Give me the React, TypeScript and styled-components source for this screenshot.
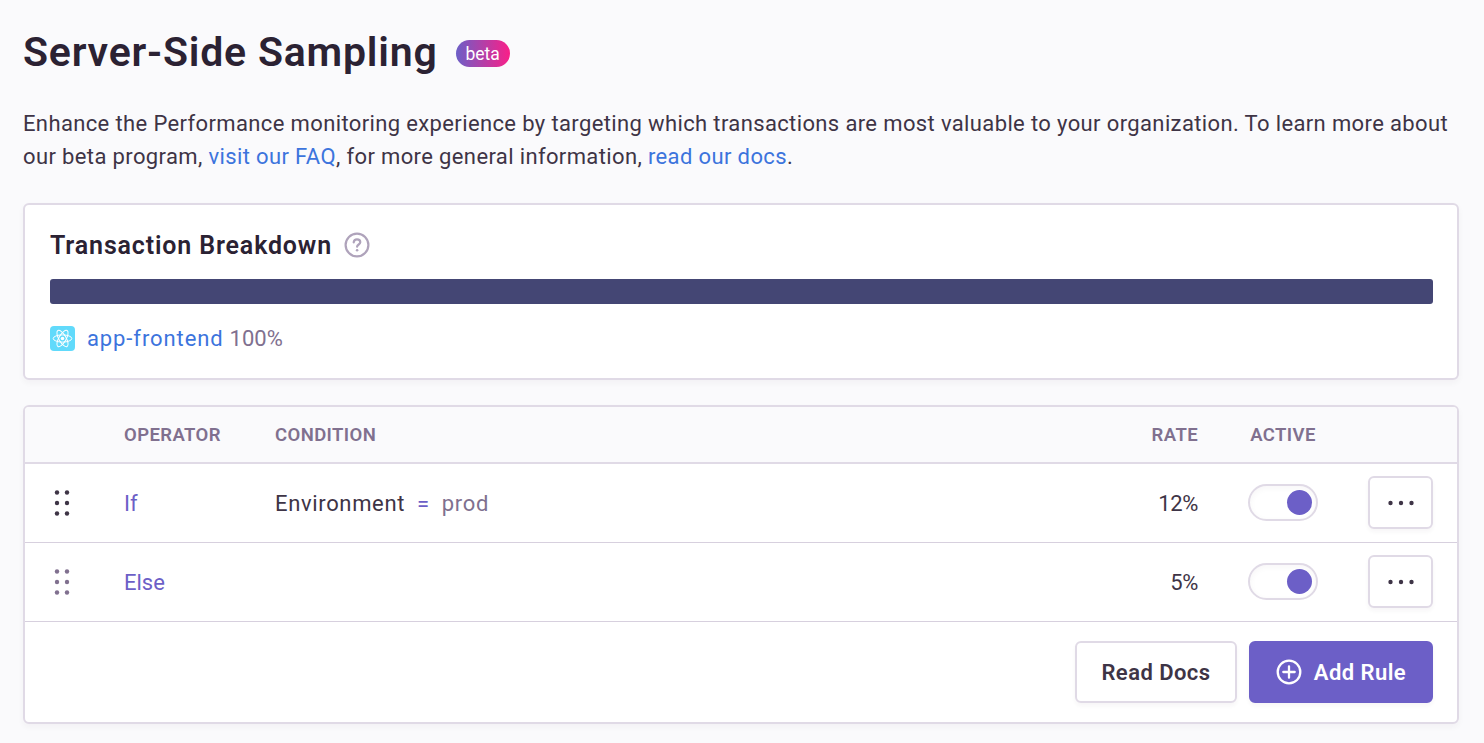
import React from 'react';
import styled, { createGlobalStyle, css } from 'styled-components';

const Global = createGlobalStyle`
  *, *::before, *::after { box-sizing: border-box; }
  body {
    margin: 0;
    background: #fafafc;
    color: #3e3446;
    font-family: Roboto, "Liberation Sans", sans-serif;
    font-size: 22px;
    -webkit-font-smoothing: antialiased;
  }
`;

const Page = styled.main`
  height: 743px;
  padding: 28px 25px 0 23px;
  overflow: hidden;
`;

const Heading = styled.header`
  display: flex;
  align-items: center;
  gap: 18px;
  height: 48px;
`;

const Title = styled.h1`
  margin: 0;
  color: #2b2233;
  font-size: 41px;
  line-height: 48px;
  font-weight: 600;
  letter-spacing: 0.8px;
  white-space: nowrap;
`;

const BetaBadge = styled.span`
  width: 54px;
  height: 27px;
  margin-top: 2px;
  border-radius: 14px;
  background: linear-gradient(90deg, #6c5fc7, #fa1f88);
  color: #fff;
  font-size: 17.5px;
  line-height: 28px;
  text-align: center;
`;

const Intro = styled.p`
  margin: 31px 0 30px;
  line-height: 33px;
  letter-spacing: 0.37px;
  white-space: nowrap;
`;

const Link = styled.a`
  color: #3c74dd;
  text-decoration: none;
`;

const Panel = styled.section`
  border: 2px solid #e0dae6;
  border-radius: 6px;
  background: #fff;
  box-shadow: 0 3px 6px rgba(43, 34, 51, 0.04);
  overflow: hidden;
`;

const BreakdownPanel = styled(Panel)`
  height: 177px;
  margin-bottom: 25px;
  padding: 22px 24px 22px 25px;
`;

const PanelTitle = styled.h2`
  display: flex;
  align-items: center;
  gap: 12px;
  margin: 0;
  height: 36px;
  color: #2b2233;
  font-size: 25px;
  font-weight: 600;
  letter-spacing: 0.85px;
`;

const Bar = styled.div`
  height: 25px;
  margin: 16px 0 21px;
  border-radius: 3px;
  background: #444674;
`;

const Project = styled.div`
  display: flex;
  align-items: center;
  height: 26px;
  letter-spacing: 0.9px;
`;

const PlatformTile = styled.span`
  display: flex;
  width: 25px;
  height: 25px;
  margin-right: 12px;
  border-radius: 4px;
  background: #61dafb;
`;

const Percent = styled.span`
  margin-left: 6px;
  color: #80708f;
  letter-spacing: 0;
`;

const grid = css`
  display: grid;
  grid-template-columns: 74px 151px 1fr 200px 50px 70px 50px 65px;
  align-items: center;
  padding: 0 24px 0 25px;
`;

const HeaderRow = styled.div`
  ${grid}
  height: 57px;
  border-bottom: 2px solid #e0dae6;
  background: #fafafc;
  color: #80708f;
  font-size: 18.5px;
  font-weight: 600;
  letter-spacing: 0.4px;
`;

const RuleRow = styled.div`
  ${grid}
  height: 79px;
  border-bottom: 1px solid #d7d0de;
`;

const Cell = styled.div<{ $column: number; $end?: boolean; $center?: boolean }>`
  grid-column: ${p => p.$column};
  display: flex;
  justify-content: ${p => (p.$end ? 'flex-end' : p.$center ? 'center' : 'flex-start')};
`;

const Handle = styled.svg<{ $muted?: boolean }>`
  display: block;
  width: 25px;
  height: 26px;
  fill: ${p => (p.$muted ? '#80708f' : '#3e3446')};
`;

const Operator = styled.span`
  color: #6c5fc7;
`;

const Condition = styled.span`
  display: flex;
  letter-spacing: 0.65px;
`;

const Equals = styled.span`
  margin: 0 12px;
  color: #6c5fc7;
`;

const Value = styled.span`
  color: #80708f;
`;

const Rate = styled.span`
  letter-spacing: -0.4px;
`;

const Toggle = styled.button`
  display: flex;
  align-items: center;
  justify-content: flex-end;
  width: 70px;
  height: 37px;
  margin-bottom: 1px;
  padding: 0 4px;
  border: 2px solid #e0dae6;
  border-radius: 19px;
  background: #fff;
  box-shadow: inset 0 2px 6px rgba(43, 34, 51, 0.04);
`;

const Knob = styled.span`
  width: 25px;
  height: 25px;
  border-radius: 50%;
  background: #6c5fc7;
`;

const Button = styled.button<{ $primary?: boolean }>`
  display: flex;
  align-items: center;
  justify-content: center;
  gap: 12px;
  height: 62px;
  padding: 0;
  width: ${p => (p.$primary ? '184px' : '162px')};
  border: 2px solid ${p => (p.$primary ? '#6c5fc7' : '#e0dae6')};
  border-radius: 6px;
  background: ${p => (p.$primary ? '#6c5fc7' : '#fff')};
  box-shadow: 0 3px 4px rgba(43, 34, 51, 0.04);
  color: ${p => (p.$primary ? '#fff' : '#3e3446')};
  font: 600 22px Roboto, sans-serif;
  letter-spacing: 0.45px;
`;

const MoreButton = styled(Button)`
  width: 65px;
  height: 53px;
  margin-bottom: 1px;
`;

const Footer = styled.footer`
  display: flex;
  justify-content: flex-end;
  gap: 12px;
  height: 100px;
  padding: 19px 24px 0;
`;

const HelpIcon = () => (
  <svg width="26" height="26" viewBox="0 0 26 26" fill="none" stroke="#afa3bb" strokeWidth="2.2" strokeLinecap="round" strokeLinejoin="round">
    <circle cx="13" cy="13" r="11.4" />
    <path d="M9.7 10.3C9.9 8.4 11.3 7.4 13 7.4c1.9 0 3.3 1.2 3.3 2.9 0 2.1-3.2 2.3-3.2 4.4" />
    <circle cx="13.1" cy="18.2" r="1.3" fill="#afa3bb" stroke="none" />
  </svg>
);

const ReactLogo = () => (
  <svg width="25" height="25" viewBox="0 0 25 25" fill="none" stroke="#fff" strokeWidth="1">
    <ellipse cx="12.5" cy="12.5" rx="9.3" ry="3.6" />
    <ellipse cx="12.5" cy="12.5" rx="9.3" ry="3.6" transform="rotate(60 12.5 12.5)" />
    <ellipse cx="12.5" cy="12.5" rx="9.3" ry="3.6" transform="rotate(120 12.5 12.5)" />
    <circle cx="12.5" cy="12.5" r="1.8" fill="#fff" stroke="none" />
  </svg>
);

const DragHandle = ({ muted }: { muted?: boolean }) => (
  <Handle $muted={muted} viewBox="0 0 25 26">
    {[7, 17].map(x => [2.5, 13, 23.5].map(y => <circle key={`${x}-${y}`} cx={x} cy={y} r="2.2" />))}
  </Handle>
);

const Dots = () => (
  <svg width="26" height="6" viewBox="0 0 26 6" fill="#3e3446">
    <circle cx="2.5" cy="3" r="2.2" />
    <circle cx="13" cy="3" r="2.2" />
    <circle cx="23.5" cy="3" r="2.2" />
  </svg>
);

const AddIcon = () => (
  <svg width="26" height="26" viewBox="0 0 26 26" fill="none" stroke="#fff" strokeWidth="2.3" strokeLinecap="round">
    <circle cx="13" cy="13" r="11.3" />
    <path d="M13 7.3v11.4M7.3 13h11.4" />
  </svg>
);

const rules = [
  { operator: 'If', condition: { field: 'Environment', value: 'prod' }, rate: '12%' },
  { operator: 'Else', rate: '5%' },
];

export default function App() {
  return (
    <>
      <Global />
      <Page>
        <Heading>
          <Title>Server-Side Sampling</Title>
          <BetaBadge>beta</BetaBadge>
        </Heading>
        <Intro>
          Enhance the Performance monitoring experience by targeting which transactions are most valuable to your organization. To learn more about
          <br />
          our beta program, <Link>visit our FAQ</Link>, for more general information, <Link>read our docs</Link>.
        </Intro>
        <BreakdownPanel>
          <PanelTitle>
            <span>Transaction Breakdown</span>
            <HelpIcon />
          </PanelTitle>
          <Bar />
          <Project>
            <PlatformTile>
              <ReactLogo />
            </PlatformTile>
            <Link>app-frontend</Link>
            <Percent>100%</Percent>
          </Project>
        </BreakdownPanel>
        <Panel>
          <HeaderRow>
            <Cell $column={2}>OPERATOR</Cell>
            <Cell $column={3}>CONDITION</Cell>
            <Cell $column={4} $end>RATE</Cell>
            <Cell $column={6} $center>ACTIVE</Cell>
          </HeaderRow>
          {rules.map(rule => (
            <RuleRow key={rule.operator}>
              <Cell $column={1}>
                <DragHandle muted={!rule.condition} />
              </Cell>
              <Cell $column={2}>
                <Operator>{rule.operator}</Operator>
              </Cell>
              <Cell $column={3}>
                {rule.condition && (
                  <Condition>
                    {rule.condition.field}
                    <Equals>=</Equals>
                    <Value>{rule.condition.value}</Value>
                  </Condition>
                )}
              </Cell>
              <Cell $column={4} $end>
                <Rate>{rule.rate}</Rate>
              </Cell>
              <Cell $column={6}>
                <Toggle role="switch" aria-checked="true">
                  <Knob />
                </Toggle>
              </Cell>
              <Cell $column={8}>
                <MoreButton aria-label="More">
                  <Dots />
                </MoreButton>
              </Cell>
            </RuleRow>
          ))}
          <Footer>
            <Button>Read Docs</Button>
            <Button $primary>
              <AddIcon />
              Add Rule
            </Button>
          </Footer>
        </Panel>
      </Page>
    </>
  );
}
